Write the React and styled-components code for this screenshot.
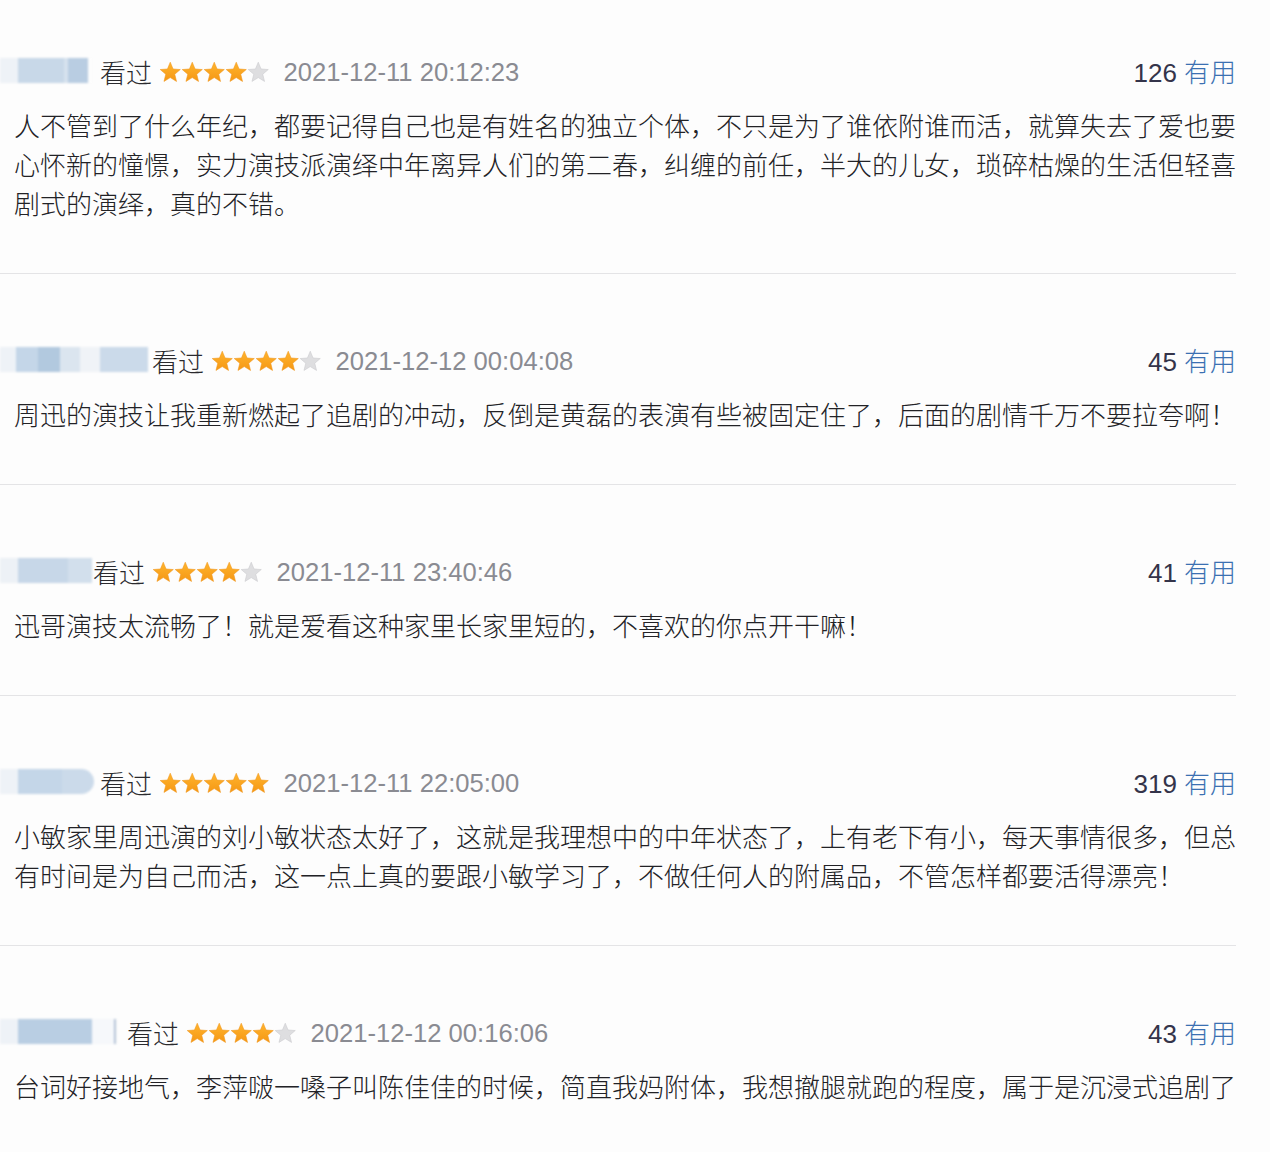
import React from 'react';
import styled, { createGlobalStyle } from 'styled-components';

const GlobalStyle = createGlobalStyle`
  html, body { margin: 0; padding: 0; background: #fdfdfd; }
  body { font-family: "Noto Sans CJK SC", sans-serif; }
`;

// --- 스타일 ---
const Page = styled.div`
  width: 1270px; padding-top: 52px;
  background: #fdfdfd;
`;
const Review = styled.section`
  width: 1236px;
  padding-top: ${p => (p.$first ? '0' : '67px')};
  padding-bottom: ${p => (p.$last ? '0' : '51px')};
  border-bottom: ${p => (p.$last ? 'none' : '1px solid #e4e4e6')};
`;
const Header = styled.div`
  height: 40px; display: flex; align-items: center;
  margin-bottom: 13px;
`;
const Name = styled.div`
  height: 25px; margin-top: -3px;
  width: ${p => p.$w}px; margin-right: ${p => p.$gap}px;
  background: ${p => p.$bg};
  border-radius: ${p => (p.$round ? '0 14px 14px 0' : '0')};
  filter: blur(1.2px);
  flex-shrink: 0;
`;
const Watched = styled.span`
  font-size: 26px; color: #2a2a2e; line-height: 40px; font-weight: 300;
  font-family: "Noto Sans CJK SC", sans-serif;
`;
const Stars = styled.span`
  display: inline-flex; margin: 0 14px 0 7px;
`;
const Star = styled.svg`
  width: 22.5px; height: 22.5px; margin-right: -0.4px;
`;
const DateText = styled.span`
  font-size: 25.6px; color: #8a8b92;
  font-family: "Liberation Sans", "Noto Sans CJK SC", sans-serif;
`;
const Votes = styled.span`
  margin-left: auto; margin-top: -4px; font-size: 26px; color: #34344a;
  font-family: "Liberation Sans", "Noto Sans CJK SC", sans-serif;
`;
const Useful = styled.span`
  color: #3b70b2; margin-left: 7px; font-weight: 300;
  font-family: "Noto Sans CJK SC", sans-serif;
`;
const Body = styled.p`
  margin: 0; padding-left: 14px; width: 1222px;
  font-size: 26px; line-height: 39px; color: #222226; font-weight: 300;
  font-family: "Noto Sans CJK SC", sans-serif;
`;

const STAR = '12,1.3 15,8.5 22.7,9.1 16.8,14.1 18.7,21.8 12,17.7 5.3,21.8 7.2,14.1 1.3,9.1 9,8.5';

const Rating = ({ value }) => (
  <Stars>
    {[0, 1, 2, 3, 4].map(i => (
      <Star key={i} viewBox="0 0 24 24">
        <defs>
          <linearGradient id="sg" x1="0" y1="0" x2="0" y2="1">
            <stop offset="0" stopColor="#ffb52e" />
            <stop offset="1" stopColor="#f59714" />
          </linearGradient>
        </defs>
        <polygon
          points={STAR}
          fill={i < value ? 'url(#sg)' : '#dedee0'}
          stroke={i < value ? '#f0961a' : '#c9c9cd'}
          strokeWidth="0.6"
        />
      </Star>
    ))}
  </Stars>
);

const reviews = [
  {
    w: 92, gap: 8,
    bg: 'linear-gradient(90deg, #eef2f7 0, #eef2f7 18px, #c8d8e8 18px, #c8d8e8 64px, #d6e2ee 64px, #d6e2ee 68px, #b9cde2 68px, #b9cde2 88px, #fdfdfd 88px)',
    rating: 4, date: '2021-12-11 20:12:23', votes: 126,
    text: '人不管到了什么年纪，都要记得自己也是有姓名的独立个体，不只是为了谁依附谁而活，就算失去了爱也要心怀新的憧憬，实力演技派演绎中年离异人们的第二春，纠缠的前任，半大的儿女，琐碎枯燥的生活但轻喜剧式的演绎，真的不错。',
  },
  {
    w: 148, gap: 4,
    bg: 'linear-gradient(90deg, #eef2f7 0, #eef2f7 16px, #c4d6e8 16px, #c4d6e8 38px, #b2c9df 38px, #b2c9df 60px, #dbe5ef 60px, #dbe5ef 80px, #f0f3f7 80px, #f0f3f7 100px, #cbdaea 100px, #cbdaea 148px)',
    rating: 4, date: '2021-12-12 00:04:08', votes: 45,
    text: '周迅的演技让我重新燃起了追剧的冲动，反倒是黄磊的表演有些被固定住了，后面的剧情千万不要拉夸啊！',
  },
  {
    w: 92, gap: 1,
    bg: 'linear-gradient(90deg, #edf1f6 0, #edf1f6 18px, #c7d7e8 18px, #c7d7e8 68px, #d2dfec 68px, #d2dfec 92px)',
    rating: 4, date: '2021-12-11 23:40:46', votes: 41,
    text: '迅哥演技太流畅了！就是爱看这种家里长家里短的，不喜欢的你点开干嘛！',
  },
  {
    w: 94, gap: 6, round: true,
    bg: 'linear-gradient(90deg, #eef2f7 0, #eef2f7 18px, #c4d6e8 18px, #c4d6e8 62px, #cbdaea 62px, #cbdaea 94px)',
    rating: 5, date: '2021-12-11 22:05:00', votes: 319,
    text: '小敏家里周迅演的刘小敏状态太好了，这就是我理想中的中年状态了，上有老下有小，每天事情很多，但总有时间是为自己而活，这一点上真的要跟小敏学习了，不做任何人的附属品，不管怎样都要活得漂亮！',
  },
  {
    w: 118, gap: 9,
    bg: 'linear-gradient(90deg, #eef2f7 0, #eef2f7 18px, #b9cee3 18px, #b9cee3 92px, #f6f8fb 92px, #f6f8fb 114px, #b4c3d6 114px, #b4c3d6 116px, #fdfdfd 116px)',
    rating: 4, date: '2021-12-12 00:16:06', votes: 43,
    text: '台词好接地气，李萍啵一嗓子叫陈佳佳的时候，简直我妈附体，我想撤腿就跑的程度，属于是沉浸式追剧了',
  },
];

const App = () => (
  <>
    <GlobalStyle />
    <Page>
      {reviews.map((r, i) => (
        <Review key={i} $first={i === 0} $last={i === reviews.length - 1}>
          <Header>
            <Name $w={r.w} $gap={r.gap} $bg={r.bg} $round={r.round} />
            <Watched>看过</Watched>
            <Rating value={r.rating} />
            <DateText>{r.date}</DateText>
            <Votes>
              {r.votes}
              <Useful>有用</Useful>
            </Votes>
          </Header>
          <Body>{r.text}</Body>
        </Review>
      ))}
    </Page>
  </>
);

export default App;
